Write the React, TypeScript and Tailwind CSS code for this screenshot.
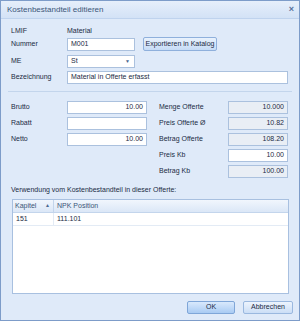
import React from "react";

const font = { fontFamily: '"Liberation Sans", Arial, sans-serif' };

function Field({ value, className = "", readOnly = false }: { value: string; className?: string; readOnly?: boolean }) {
  return (
    <div
      className={`h-[13px] shrink-0 border border-[#abc1de] px-[3px] flex items-center justify-end text-[7px] text-[#1b2a44] ${
        readOnly ? "bg-[#e9eef5]" : "bg-white"
      } ${className}`}
    >
      {value}
    </div>
  );
}

function LeftRow({ label, value }: { label: string; value: string }) {
  return (
    <div className="flex items-center h-[13px]">
      <span className="w-[56px] shrink-0">{label}</span>
      <Field value={value} className="w-[80px]" />
    </div>
  );
}

function RightRow({ label, value, readOnly }: { label: string; value: string; readOnly?: boolean }) {
  return (
    <div className="flex items-center h-[13px]">
      <span className="w-[69px] shrink-0">{label}</span>
      <Field value={value} readOnly={readOnly} className="w-[60px]" />
    </div>
  );
}

export default function App() {
  return (
    <div
      className="w-[300px] h-[321px] border border-[#7d9cc9] bg-[#dfeaf9] flex flex-col text-[7px] text-[#1b2a44]"
      style={font}
    >
      {/* title bar */}
      <div className="h-[18px] shrink-0 flex items-center justify-between pl-[6px] pr-[5px] bg-gradient-to-b from-[#e6effb] to-[#d3e2f6] border-b border-[#bfd3ee]">
        <span className="text-[8px] text-[#3b5678]">Kostenbestandteil editieren</span>
        <span className="text-[9px] font-bold text-[#56709a] leading-none">×</span>
      </div>

      <div className="flex-1 flex flex-col pl-[10px] pr-[6px] pt-[8px]">
        {/* top block */}
        <div className="flex items-center h-[9px]">
          <span className="w-[56px] shrink-0">LMIF</span>
          <span>Material</span>
        </div>
        <div className="flex items-center h-[14px] mt-[1px]">
          <span className="w-[56px] shrink-0">Nummer</span>
          <div className="w-[68px] shrink-0 h-[13px] bg-white border border-[#abc1de] px-[3px] flex items-center">M001</div>
          <button className="ml-[8px] w-[74px] shrink-0 h-[14px] rounded-[2px] border border-[#8fb0dc] bg-gradient-to-b from-[#e9f2fd] to-[#c6dbf6] text-[7px] text-[#1b2a44]">
            Exportieren in Katalog
          </button>
        </div>
        <div className="flex items-center h-[13px] mt-[4px]">
          <span className="w-[56px] shrink-0">ME</span>
          <div className="w-[68px] shrink-0 h-[13px] bg-white border border-[#abc1de] pl-[3px] pr-[4px] flex items-center justify-between">
            <span>St</span>
            <span className="text-[5px] text-[#4a6890]">▼</span>
          </div>
        </div>
        <div className="flex items-center h-[13px] mt-[3px]">
          <span className="w-[56px] shrink-0">Bezeichnung</span>
          <div className="w-[221px] shrink-0 h-[13px] bg-white border border-[#abc1de] px-[3px] flex items-center">
            Material in Offerte erfasst
          </div>
        </div>

        <div className="h-px bg-[#c3d5ec] mt-[7px] ml-[-3px] mr-[1px]" />

        {/* price block */}
        <div className="flex mt-[9px]">
          <div className="flex flex-col gap-[3px] w-[148px] shrink-0">
            <LeftRow label="Brutto" value="10.00" />
            <LeftRow label="Rabatt" value="" />
            <LeftRow label="Netto" value="10.00" />
          </div>
          <div className="flex flex-col gap-[3px]">
            <RightRow label="Menge Offerte" value="10.000" readOnly />
            <RightRow label="Preis Offerte Ø" value="10.82" readOnly />
            <RightRow label="Betrag Offerte" value="108.20" readOnly />
            <RightRow label="Preis Kb" value="10.00" />
            <RightRow label="Betrag Kb" value="100.00" readOnly />
          </div>
        </div>

        <div className="mt-[8px] h-[9px] flex items-center">Verwendung vom Kostenbestandteil in dieser Offerte:</div>

        {/* list */}
        <div className="mt-[4px] ml-[1px] w-[277px] h-[95px] bg-white border border-[#a8c0e0] flex flex-col">
          <div className="h-[13px] flex bg-gradient-to-b from-[#f1f6fd] to-[#dbe7f7] border-b border-[#c3d5ec] text-[#3b5678]">
            <div className="w-[41px] flex items-center justify-between pl-[2px] pr-[3px] border-r border-[#c3d5ec]">
              <span>Kapitel</span>
              <span className="text-[5px] text-[#4a6890]">▲</span>
            </div>
            <div className="flex-1 flex items-center pl-[3px]">NPK Position</div>
          </div>
          <div className="h-[13px] flex border-b border-[#e3ebf5]">
            <div className="w-[41px] flex items-center pl-[3px] border-r border-[#e3ebf5]">151</div>
            <div className="flex-1 flex items-center pl-[3px]">111.101</div>
          </div>
        </div>

        {/* buttons */}
        <div className="flex justify-end gap-[8px] mt-[7px]">
          <button className="w-[48px] h-[13px] rounded-[2px] border border-[#7fa6d8] bg-gradient-to-b from-[#d9e9fc] to-[#a9cbf3] text-[7px] text-[#1b2a44]">
            OK
          </button>
          <button className="w-[50px] h-[13px] rounded-[2px] border border-[#9ab8df] bg-gradient-to-b from-[#edf4fd] to-[#cbdef6] text-[7px] text-[#1b2a44]">
            Abbrechen
          </button>
        </div>
      </div>
    </div>
  );
}
